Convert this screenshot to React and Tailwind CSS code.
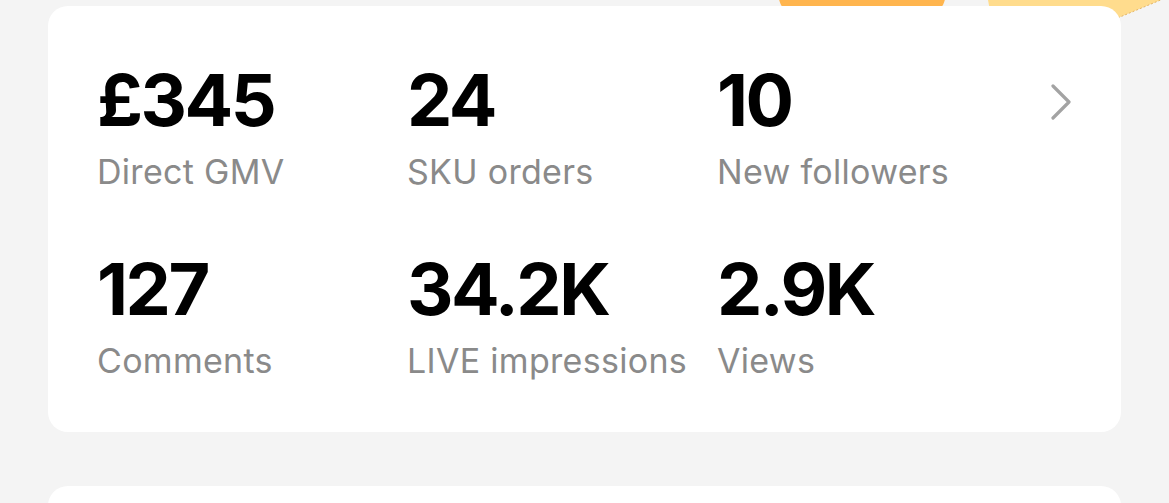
import React from "react";

const stats = [
  { value: "£345", label: "Direct GMV" },
  { value: "24", label: "SKU orders" },
  { value: "10", label: "New followers" },
  { value: "127", label: "Comments" },
  { value: "34.2K", label: "LIVE impressions" },
  { value: "2.9K", label: "Views" },
];

function Decor() {
  return (
    <svg
      className="absolute left-0 top-0 z-0"
      width="1169"
      height="30"
      viewBox="0 0 1169 30"
    >
      <rect x="778" y="-120" width="168" height="145" rx="34" fill="#FFB54E" />
      <path
        d="M986 -20 L1175 -20 L1175 -6 L1108 22 L1000 22 Q989 12 988 0 Z"
        fill="#FFDC8D"
      />
      <path
        d="M1175 -6 L1108 22"
        stroke="#E2B466"
        strokeWidth="1"
        strokeDasharray="2 2"
        fill="none"
      />
    </svg>
  );
}

export default function App() {
  return (
    <div
      className="relative h-[503px] overflow-hidden bg-[#f4f4f4]"
      style={{ fontFamily: "Inter, 'Noto Sans', sans-serif" }}
    >
      <Decor />
      <div className="relative z-10 flex flex-col gap-[54px] px-12 pt-[6px]">
        <div className="flex rounded-[20px] bg-white pl-[49px] pr-[48px] pt-[58px] pb-[51px]">
          <div className="grid flex-1 grid-cols-[310px_310px_1fr] gap-y-[61px]">
            {stats.map((s) => (
              <div key={s.label} className="flex flex-col gap-[16px]">
                <div className="text-[72px] font-bold leading-none tracking-[-2.5px] text-black">
                  {s.value}
                </div>
                <div className="text-[34px] leading-[40px] tracking-[0.3px] text-[#8a8a8a]">
                  {s.label}
                </div>
              </div>
            ))}
          </div>
          <div className="pt-[20px]">
            <svg width="24" height="36" viewBox="0 0 24 36" fill="none">
              <path
                d="M4 2 L20 18 L4 34"
                stroke="#a3a3a3"
                strokeWidth="3.2"
                strokeLinecap="round"
                strokeLinejoin="round"
              />
            </svg>
          </div>
        </div>
        <div className="h-[80px] rounded-t-[20px] bg-white" />
      </div>
    </div>
  );
}
